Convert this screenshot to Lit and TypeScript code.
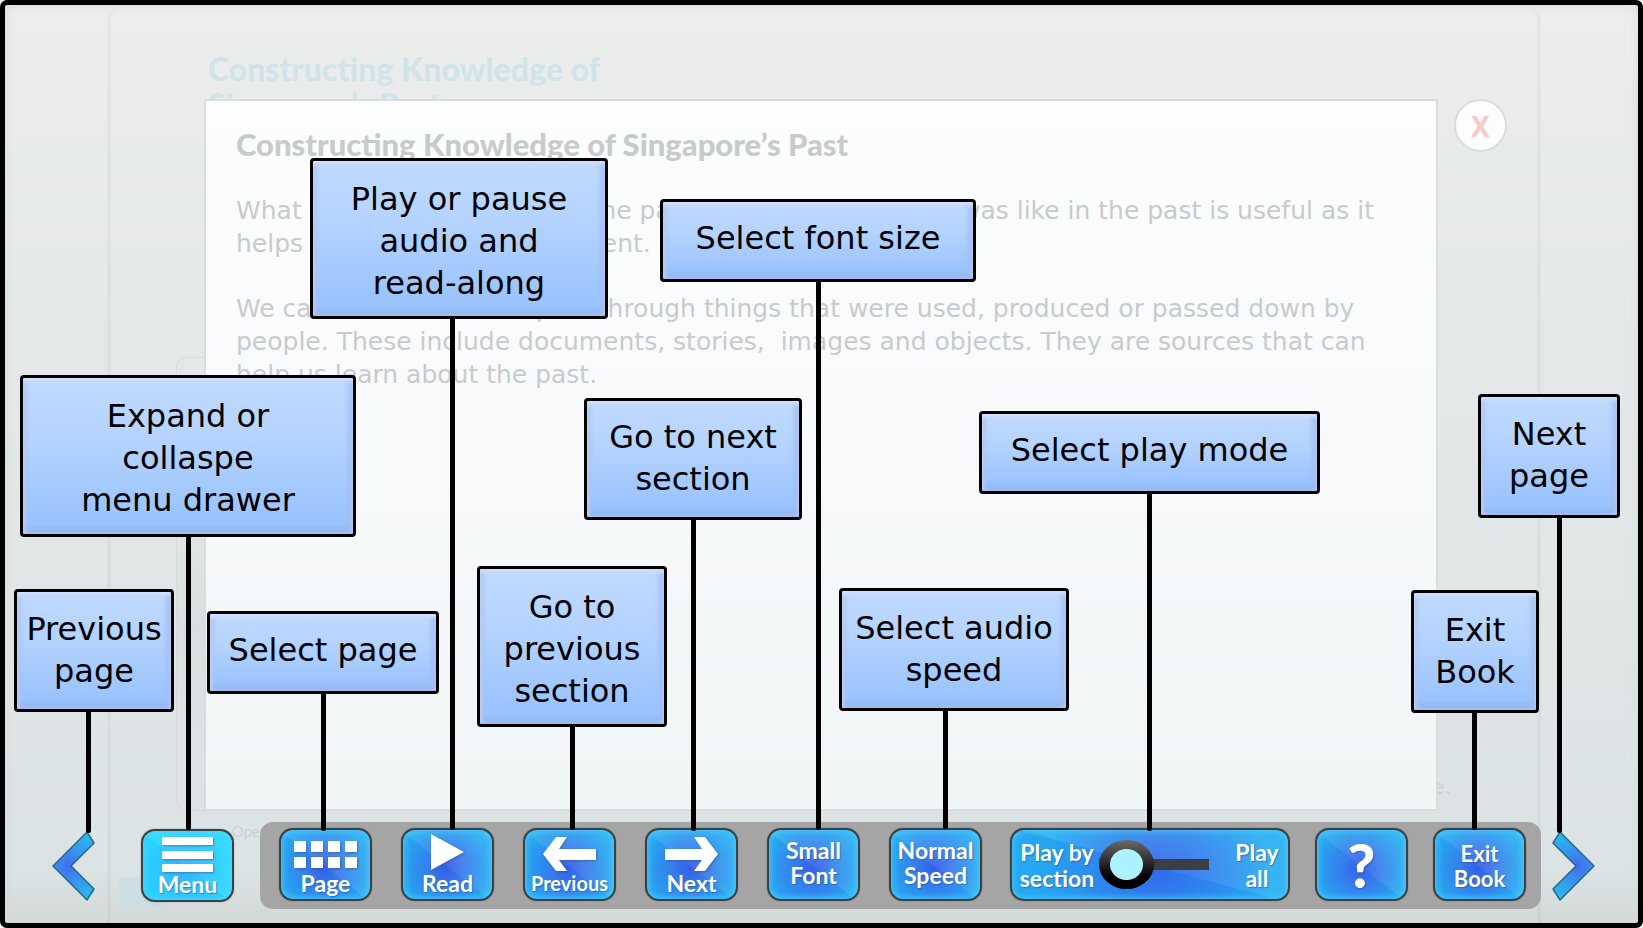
import { LitElement, html, css, svg } from "lit";
import { customElement, property } from "lit/decorators.js";
import { classMap } from "lit/directives/class-map.js";
import { styleMap } from "lit/directives/style-map.js";

interface Note {
  lines: string[];
  x: number;
  y: number;
  w: number;
  h: number;
  stem: number;
  end: number;
}

/* Canvas on which the help notes are placed; positions scale with the window. */
const CANVAS_W = 1643;
const CANVAS_H = 928;
const pctX = (n: number) => `${(n / CANVAS_W) * 100}%`;
const pctY = (n: number) => `${(n / CANVAS_H) * 100}%`;

const NOTES: Note[] = [
  { lines: ["Previous", "page"], x: 14, y: 589, w: 160, h: 123, stem: 86, end: 833 },
  { lines: ["Expand or", "collaspe", "menu drawer"], x: 20, y: 375, w: 336, h: 162, stem: 186, end: 830 },
  { lines: ["Select page"], x: 207, y: 611, w: 232, h: 83, stem: 321, end: 831 },
  { lines: ["Play or pause", "audio and", "read-along"], x: 310, y: 158, w: 298, h: 161, stem: 450, end: 830 },
  { lines: ["Go to", "previous", "section"], x: 477, y: 566, w: 190, h: 161, stem: 570, end: 830 },
  { lines: ["Go to next", "section"], x: 584, y: 398, w: 218, h: 122, stem: 691, end: 831 },
  { lines: ["Select font size"], x: 660, y: 199, w: 316, h: 83, stem: 816, end: 830 },
  { lines: ["Select audio", "speed"], x: 839, y: 588, w: 230, h: 123, stem: 943, end: 829 },
  { lines: ["Select play mode"], x: 979, y: 411, w: 341, h: 83, stem: 1147, end: 831 },
  { lines: ["Exit", "Book"], x: 1411, y: 590, w: 128, h: 123, stem: 1472, end: 830 },
  { lines: ["Next", "page"], x: 1478, y: 394, w: 142, h: 124, stem: 1557, end: 833 },
];

const ICONS = {
  menu: svg`<path fill="#fff" d="M0 0h51v8H0zM0 14h51v8H0zM0 27h51v8H0z"/>`,
  page: svg`<path fill="#fff" d="M0 0h12v11H0zM17 0h12v11H17zM34 0h12v11H34zM51 0h12v11H51zM0 16h12v11H0zM17 16h12v11H17zM34 16h12v11H34zM51 16h12v11H51z"/>`,
  read: svg`<path fill="#fff" d="M0 0L33 18L0 36z"/>`,
  previous: svg`<path fill="#fff" d="M0 17L13 0H24L16 12H53V23H16L24 34H13z"/>`,
  next: svg`<path fill="#fff" d="M53 17L40 0H29L37 12H0V23H37L29 34H40z"/>`,
};

@customElement("tool-button")
export class ToolButton extends LitElement {
  @property() icon = "";
  @property() label = "";
  @property() tone = "";
  @property() size = "";

  static styles = css`
    :host { display: block; flex: none; }
    .face {
      display: flex;
      flex-direction: column;
      align-items: center;
      justify-content: center;
      box-sizing: border-box;
      width: 93px;
      height: 73px;
      padding: 0 0 3px;
      border: 2px solid #3d4145;
      border-radius: 14px;
      color: #fff;
      font: 700 23px/25px Lato, "Open Sans", sans-serif;
      text-shadow: 1px 1px 1px #2a4a8a88;
      white-space: pre;
      cursor: pointer;
      background:
        linear-gradient(38deg, #1488f028 48%, #ffffff10 49%),
        radial-gradient(circle at 48% 56%, #3a58e8 0, #3b7cec 30%, #2ba9f0 72%, #2cb4f2 100%);
      box-shadow: inset 0 0 7px 1px #4fd4ffcc, 0 0 1px #3d4145;
    }
    .cyan {
      background:
        linear-gradient(38deg, #20b8ff30 48%, #ffffff0c 49%),
        radial-gradient(circle at 48% 56%, #38b4ff 0, #30c8ff 40%, #2cdcff 80%);
    }
    .with-icon { justify-content: flex-end; }
    .with-icon svg { margin-bottom: auto; overflow: visible; filter: drop-shadow(1px 1px 1px #2a4a8a88); }
    .menu, .previous, .next { padding-top: 8px; }
    .page { padding-top: 11px; }
    .read { padding-top: 4px; }
    .small { font-size: 20px; }
    .low { padding: 2px 0 0; font-size: 22px; }
    .mark { padding: 0; font: 900 60px/60px Lato, sans-serif; }
  `;

  render() {
    const sizes: Record<string, [number, number]> = {
      menu: [51, 35], page: [63, 27], read: [33, 36], previous: [53, 34], next: [53, 34],
    };
    const size = sizes[this.icon];
    return html`<button
      type="button"
      class=${classMap({
        face: true,
        cyan: this.tone === "cyan",
        "with-icon": !!size,
        [this.size || "regular"]: true,
        [this.icon || "plain"]: true,
      })}
    >${size
      ? html`<svg width=${size[0]} height=${size[1]} aria-hidden="true">${ICONS[this.icon as keyof typeof ICONS]}</svg>`
      : null}<span>${this.label}</span></button>`;
  }
}

@customElement("play-mode")
export class PlayMode extends LitElement {
  static styles = css`
    :host { display: block; }
    .face {
      display: flex;
      align-items: center;
      box-sizing: border-box;
      width: 280px;
      height: 73px;
      padding: 0 8px 0 6px;
      border: 2px solid #3d4145;
      border-radius: 14px;
      color: #fff;
      font: 700 23px/26px Lato, "Open Sans", sans-serif;
      text-align: center;
      text-shadow: 1px 1px 1px #2a4a8a88;
      background:
        linear-gradient(15deg, #1488f030 49%, #ffffff10 50%),
        radial-gradient(ellipse 42% 110% at 52% 60%, #3a63e8 0, #357fec 40%, #29aef2 100%);
      box-shadow: inset 0 0 7px 1px #4fd4ffcc, 0 0 1px #3d4145;
    }
    .start { width: 78px; }
    .end { margin-left: auto; width: 46px; }
    .slider {
      appearance: none;
      width: 110px;
      height: 49px;
      margin: 0 0 0 3px;
      background: none;
      cursor: pointer;
    }
    .slider::-webkit-slider-runnable-track { height: 11px; background: linear-gradient(90deg, transparent 30%, #3b3e42 30%); }
    .slider::-webkit-slider-thumb {
      appearance: none;
      width: 55px;
      height: 49px;
      margin-top: -19px;
      border-radius: 50%;
      background:
        radial-gradient(ellipse 17px 16px at center, #aef2ff 94%, transparent 100%),
        linear-gradient(#6a6a6a, #000 75%);
    }
  `;

  render() {
    return html`<div class="face">
      <label class="start" for="mode">Play by section</label>
      <input id="mode" class="slider" type="range" min="0" max="1" step="1" value="0" />
      <label class="end" for="mode">Play all</label>
    </div>`;
  }
}

@customElement("help-note")
export class HelpNote extends LitElement {
  @property({ attribute: false }) lines: string[] = [];

  static styles = css`
    :host { display: block; }
    .box {
      display: flex;
      flex-direction: column;
      justify-content: center;
      align-items: center;
      box-sizing: border-box;
      width: 100%;
      height: 100%;
      padding-bottom: 2px;
      border: 3px solid #000;
      border-radius: 4px;
      color: #000;
      font: 32px/42px "Comic Sans MS", "DejaVu Sans", sans-serif;
      white-space: nowrap;
      background: linear-gradient(#c0dafe, #b4d3fe 40%, #9bc4ff 88%, #9bc4ff);
      box-shadow: inset 0 4px 4px -1px #d6e2ff, inset 3px 0 5px #b4c8f0, inset -4px 0 6px #a4bef0, inset 0 -5px 6px #8cb2ec;
    }
    .one { padding-bottom: 6px; }
    .three { padding: 4px 0 0; }
  `;

  render() {
    const count = this.lines.length;
    return html`<div class=${classMap({ box: true, one: count === 1, three: count === 3 })}>
      ${this.lines.map((l) => html`<span>${l}</span>`)}
    </div>`;
  }
}

@customElement("app-root")
export class AppRoot extends LitElement {
  static styles = css`
    :host { display: block; }
    .stage {
      position: relative;
      display: flex;
      flex-direction: column;
      box-sizing: border-box;
      min-height: 100vh;
      border: 5px solid #000;
      border-radius: 7px;
      overflow: hidden;
      font-family: "Comic Sans MS", "DejaVu Sans", sans-serif;
      background: linear-gradient(#eceeed, #e5e8e9 35%, #e1e6e6 60%, #dce3e5 94%, #d3d9d8);
      box-shadow: inset 0 0 8px #d3d8d8;
    }
    .book {
      position: absolute;
      inset: 4px 97px 0 102px;
      border: solid #00000008;
      border-width: 0 4px 0 4px;
      border-radius: 10px 10px 0 0;
    }
    .picture {
      position: absolute;
      left: 65px;
      top: 348px;
      bottom: 112px;
      width: 60px;
      border: 1px solid #d6dadb;
      border-radius: 10px;
      background: linear-gradient(transparent 35%, #d8dedf 60%, transparent 90%);
    }
    .source { position: absolute; left: 98px; bottom: 82px; color: #c9d1d8; font: 15px/20px Lato, sans-serif; }
    .ending { position: absolute; right: 86px; bottom: 124px; color: #ccd0d1; font-size: 20px; line-height: 24px; }
    .tab { position: absolute; left: 8px; bottom: 16px; width: 34px; height: 30px; background: #cddfe3; }
    .tab::after {
      content: "";
      position: absolute;
      left: 22px;
      bottom: 0;
      width: 32px;
      height: 32px;
      border-radius: 50%;
      background: #c6dce1;
    }
    .cover {
      position: relative;
      box-sizing: border-box;
      height: 94px;
      margin: 0 200px;
      padding: 46px 0 0 3px;
      overflow: hidden;
      color: #d1e4e9;
      font: 900 32px/36px Lato, sans-serif;
    }
    .cover p { margin: 0; }
    .row {
      position: relative;
      display: flex;
      flex: 1;
      margin: 0 131px 0 199px;
      gap: 16px;
      align-items: stretch;
    }
    .panel {
      flex: 1;
      box-sizing: border-box;
      padding: 25px 30px;
      border: 2px solid #d9dddd;
      color: #c8cbcc;
      background: linear-gradient(#fcfefd, #f9fafc 40%, #f0f5f6);
      font-size: 25px;
      line-height: 33px;
      white-space: pre;
      overflow: hidden;
    }
    h1 { margin: 0 0 32px; font: 900 31px/36px Lato, sans-serif; }
    .panel p { margin: 0 0 32px; }
    .close {
      flex: none;
      width: 53px;
      height: 53px;
      padding: 0;
      border: 2px solid #d9dddd;
      border-radius: 50%;
      color: #f9c8cb;
      background: #fcfefe;
      font: 700 28px/40px "Noto Sans", sans-serif;
    }
    .bar {
      position: relative;
      display: flex;
      align-items: center;
      margin: 11px 42px 14px 46px;
    }
    .arrow { flex: none; width: 46px; height: 72px; padding: 0; border: 0; background: none; cursor: pointer; }
    .arrow svg { display: block; }
    .menu { margin: 0 26px 0 44px; }
    .tray {
      display: flex;
      flex: 1;
      justify-content: space-between;
      padding: 6px 15px 8px 19px;
      margin-right: 9px;
      border-radius: 13px;
      background: #a5a5a5;
    }
    .group { display: flex; gap: 29px; }
    .tight { gap: 25px; }
    .notes { position: absolute; inset: -5px; pointer-events: none; }
    .note, .stem { position: absolute; }
    .stem { width: 5px; border-radius: 0 0 3px 3px; background: #000; }
  `;

  private chevron(flip: boolean) {
    const id = flip ? "right" : "left";
    return html`<svg width="46" height="72" viewBox="0 0 46 72" aria-hidden="true">
      <defs>
        <radialGradient id=${id} gradientUnits="userSpaceOnUse" cx=${flip ? 28 : 18} cy="36" r="36">
          <stop offset="0" stop-color="#4468f0" />
          <stop offset=".35" stop-color="#3b8cee" />
          <stop offset="1" stop-color="#28b8ef" />
        </radialGradient>
      </defs>
      <path
        d=${flip ? "M10 2L44 36L10 70L3 59L26 36L3 13Z" : "M36 2L2 36L36 70L43 59L20 36L43 13Z"}
        fill="url(#${id})" stroke="#2b6680" stroke-width="1.5" stroke-linejoin="round"
      />
    </svg>`;
  }

  render() {
    return html`<main class="stage">
      <div class="book">
        <div class="picture"></div>
        <span class="source">▲&nbsp; Open-air</span>
        <span class="ending">e.</span>
        <div class="tab"></div>
      </div>
      <header class="cover"><p>Constructing Knowledge of</p><p>Singapore’s Past</p></header>
      <section class="row">
        <article class="panel"><h1>Constructing Knowledge of Singapore’s Past</h1><p>What we can find out about the past and what Singapore was like in the past is useful as it
helps us understand the present.</p><p>We can learn about the past through things that were used, produced or passed down by
people. These include documents, stories,  images and objects. They are sources that can
help us learn about the past.</p></article>
        <button class="close" type="button" aria-label="Close">X</button>
      </section>
      <nav class="bar">
        <button class="arrow" type="button" aria-label="Previous page">${this.chevron(false)}</button>
        <tool-button class="menu" icon="menu" label="Menu" tone="cyan"></tool-button>
        <div class="tray">
          <div class="group">
            <tool-button icon="page" label="Page"></tool-button>
            <tool-button icon="read" label="Read"></tool-button>
            <tool-button icon="previous" label="Previous" size="small"></tool-button>
            <tool-button icon="next" label="Next"></tool-button>
            <tool-button label=${"Small\nFont"}></tool-button>
            <tool-button label=${"Normal\nSpeed"}></tool-button>
          </div>
          <div class="group tight">
            <play-mode></play-mode>
            <tool-button label="?" size="mark"></tool-button>
            <tool-button label=${"Exit\nBook"} size="low"></tool-button>
          </div>
        </div>
        <button class="arrow" type="button" aria-label="Next page">${this.chevron(true)}</button>
      </nav>
      <div class="notes">
        ${NOTES.map((n) => html`
          <div class="stem" style=${styleMap({
            left: pctX(n.stem), top: pctY(n.y + n.h - 2), height: pctY(n.end - n.y - n.h + 2),
          })}></div>
          <help-note class="note" .lines=${n.lines} style=${styleMap({
            left: pctX(n.x), top: pctY(n.y), width: pctX(n.w), height: pctY(n.h),
          })}></help-note>`)}
      </div>
    </main>`;
  }
}
